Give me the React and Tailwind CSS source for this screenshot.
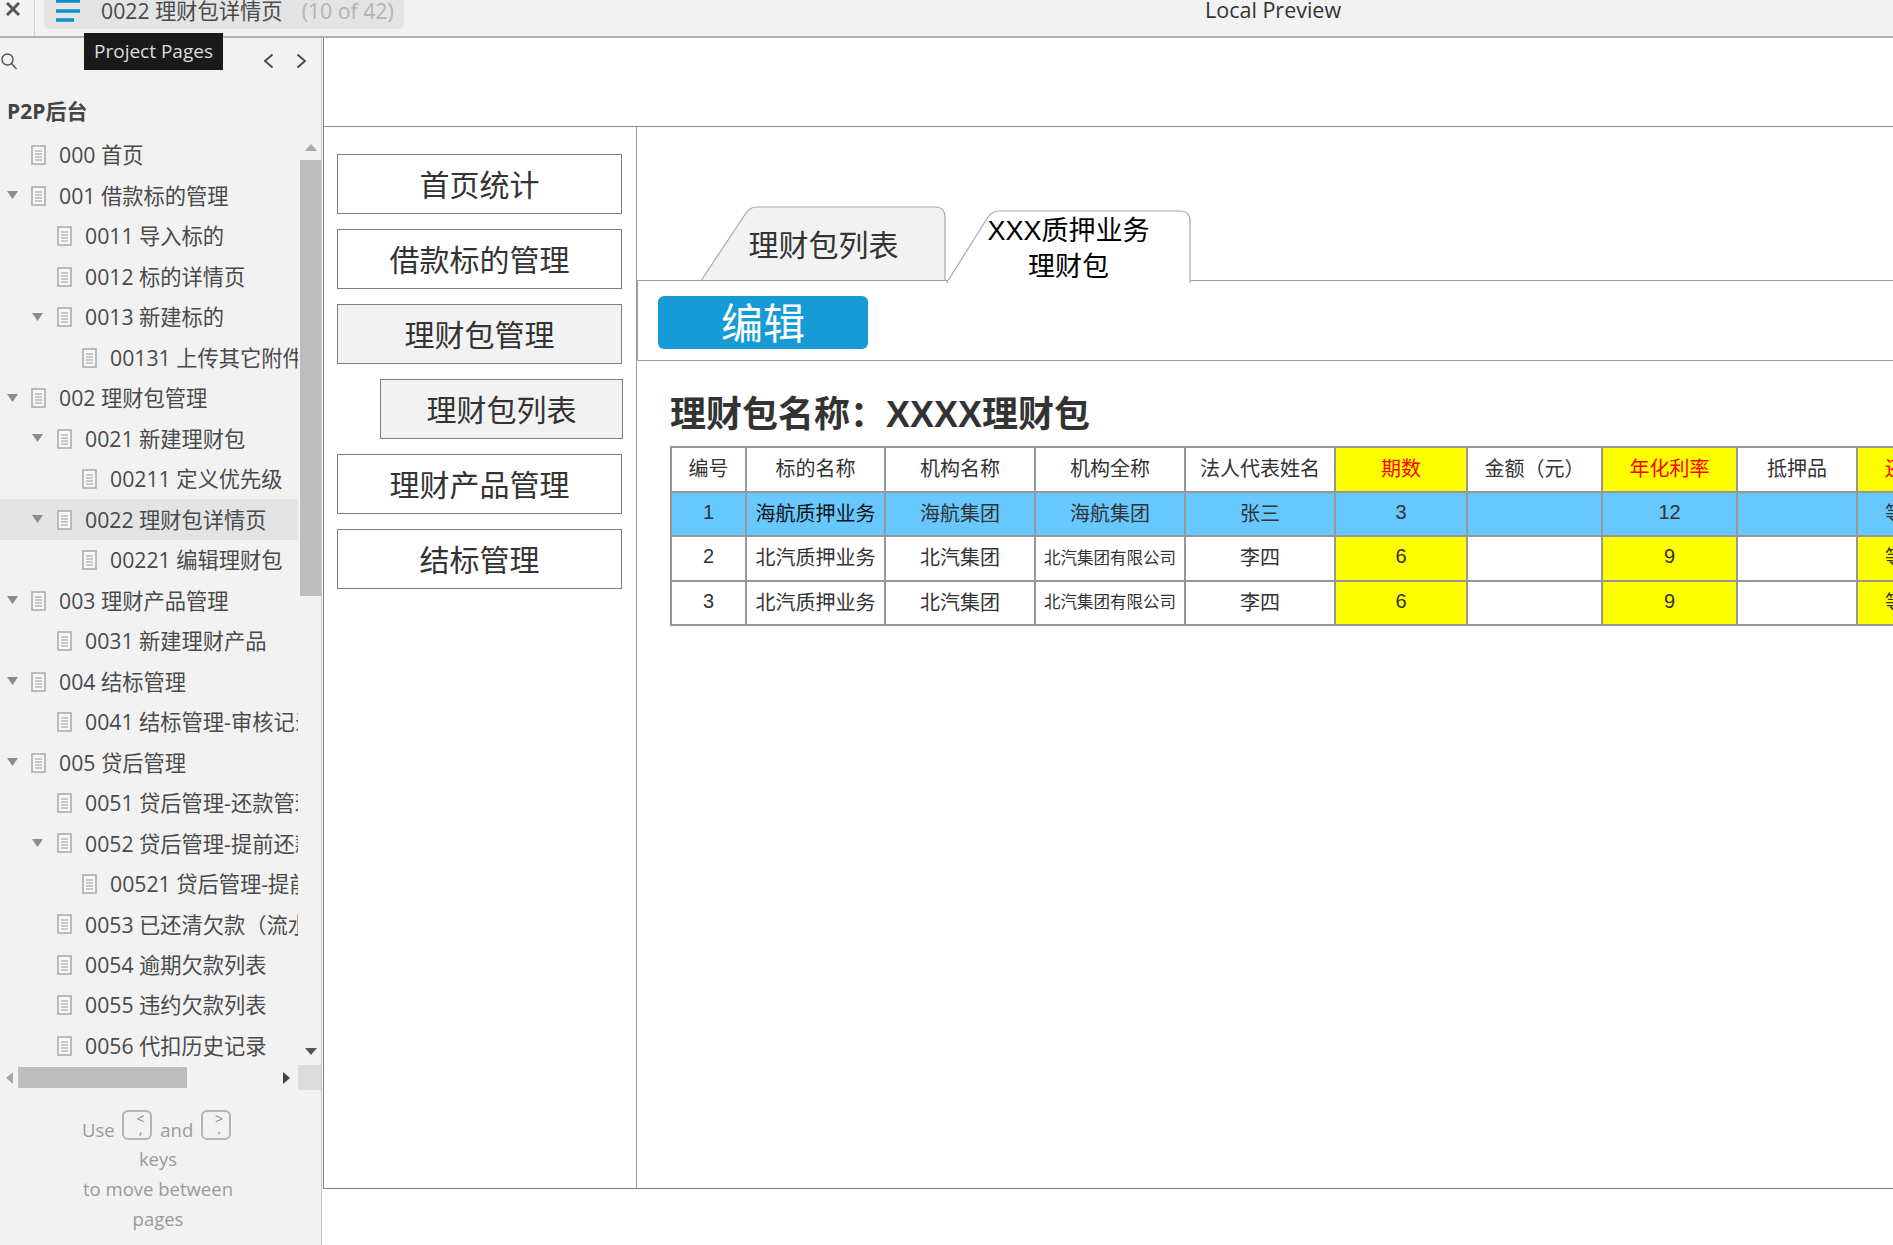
import React from 'react';

const pages = [
  { label: '000 首页', level: 0 },
  { label: '001 借款标的管理', level: 0, open: true },
  { label: '0011 导入标的', level: 1 },
  { label: '0012 标的详情页', level: 1 },
  { label: '0013 新建标的', level: 1, open: true },
  { label: '00131 上传其它附件', level: 2 },
  { label: '002 理财包管理', level: 0, open: true },
  { label: '0021 新建理财包', level: 1, open: true },
  { label: '00211 定义优先级', level: 2 },
  { label: '0022 理财包详情页', level: 1, open: true, active: true },
  { label: '00221 编辑理财包', level: 2 },
  { label: '003 理财产品管理', level: 0, open: true },
  { label: '0031 新建理财产品', level: 1 },
  { label: '004 结标管理', level: 0, open: true },
  { label: '0041 结标管理-审核记录', level: 1 },
  { label: '005 贷后管理', level: 0, open: true },
  { label: '0051 贷后管理-还款管理', level: 1 },
  { label: '0052 贷后管理-提前还款', level: 1, open: true },
  { label: '00521 贷后管理-提前还款记录', level: 2 },
  { label: '0053 已还清欠款\uFF08流水\uFF09', level: 1 },
  { label: '0054 逾期欠款列表', level: 1 },
  { label: '0055 违约欠款列表', level: 1 },
  { label: '0056 代扣历史记录', level: 1 },
];

const navItems = [
  { label: '首页统计' },
  { label: '借款标的管理' },
  { label: '理财包管理', grey: true },
  { label: '理财包列表', grey: true, sub: true },
  { label: '理财产品管理' },
  { label: '结标管理' },
];

const colWidths = [75, 139, 150, 150, 150, 132, 135, 135, 120, 136];

const headers = [
  { text: '编号' },
  { text: '标的名称' },
  { text: '机构名称' },
  { text: '机构全称' },
  { text: '法人代表姓名' },
  { text: '期数', hot: true },
  { text: '金额\uFF08元\uFF09' },
  { text: '年化利率', hot: true },
  { text: '抵押品' },
  { text: '还款方式', hot: true },
];

const rows = [
  ['1', '海航质押业务', '海航集团', '海航集团', '张三', '3', '', '12', '', '等额本息'],
  ['2', '北汽质押业务', '北汽集团', '北汽集团有限公司', '李四', '6', '', '9', '', '等额本息'],
  ['3', '北汽质押业务', '北汽集团', '北汽集团有限公司', '李四', '6', '', '9', '', '等额本息'],
];

const hotCols = [5, 7, 9];

const DocIcon = () => (
  <svg width="15" height="20" viewBox="0 0 15 20" className="shrink-0">
    <rect x="1" y="1" width="13" height="18" fill="#f7f7f7" stroke="#a8a8a8" strokeWidth="1.5" />
    <path d="M4 6h7M4 9h7M4 12h7M4 15h7" stroke="#9a9a9a" strokeWidth="1.2" />
  </svg>
);

const Caret = () => (
  <svg width="11" height="8" viewBox="0 0 11 8" className="shrink-0">
    <path d="M0 0h11L5.5 8z" fill="#8c8c8c" />
  </svg>
);

const Triangle = ({ d, w = 12, h = 7, fill = '#a8a8a8' }) => (
  <svg width={w} height={h} viewBox={`0 0 ${w} ${h}`}>
    <path d={d} fill={fill} />
  </svg>
);

const PageRow = ({ page }) => {
  const indent = ['pl-[31px]', 'pl-[57px]', 'pl-[82px]'][page.level];
  const caretPos = ['left-[7px]', 'left-[32px]', 'left-[57px]'][page.level];
  return (
    <div className={`relative flex h-[40.49px] items-center whitespace-nowrap ${indent} ${page.active ? 'bg-[#e4e4e4]' : ''}`}>
      {page.open && (
        <span className={`absolute top-[16px] ${caretPos} flex`}>
          <Caret />
        </span>
      )}
      <DocIcon />
      <span className="ml-[13px] text-[21.25px] text-[#4a4a4a]">{page.label}</span>
    </div>
  );
};

const Key = ({ top, bottom }) => (
  <span className="mx-[3px] inline-flex h-[30px] w-[30px] -translate-y-[7px] flex-col rounded-[6px] border-2 border-[#b4b4b4] pl-[6px] align-middle text-[14px] leading-[10px] text-[#8c8c8c]">
    <span className="mt-[2px]">{top}</span>
    <span>{bottom}</span>
  </span>
);

const Sidebar = () => (
  <aside className="relative flex h-full w-[322px] shrink-0 flex-col border-r border-[#c8c8c8] bg-[#f2f2f2]">
    {/* tooltip over the toolbar */}
    <div className="absolute left-[84px] top-[-5px] z-10 flex h-[37px] w-[139px] items-center justify-center bg-[#1a1a1a] text-[19px] text-[#dcdcdc]">
      Project Pages
    </div>

    <div className="flex h-[97px] shrink-0 flex-col">
      <div className="flex h-[46px] items-center pl-[1px] pr-[14px]">
        <svg width="16" height="17" viewBox="0 0 16 17" fill="none" stroke="#555" strokeWidth="1.4">
          <circle cx="6.5" cy="6.5" r="5.5" />
          <path d="M10.5 10.5l5 5.5" />
        </svg>
        <div className="ml-auto flex items-center gap-[22px]">
          <svg width="11" height="16" viewBox="0 0 11 16" fill="none" stroke="#444" strokeWidth="1.8">
            <path d="M9.5 1.5L2 8l7.5 6.5" />
          </svg>
          <svg width="11" height="16" viewBox="0 0 11 16" fill="none" stroke="#444" strokeWidth="1.8">
            <path d="M1.5 1.5L9 8l-7.5 6.5" />
          </svg>
        </div>
      </div>
      <div className="pl-[7px] pt-[9px] text-[21px] font-bold leading-[36px] text-[#444]">P2P后台</div>
    </div>

    <div className="flex h-[930px] shrink-0">
      <div className="w-[298px] shrink-0 overflow-hidden">
        {pages.map((page) => (
          <PageRow key={page.label} page={page} />
        ))}
      </div>
      <div className="flex w-[23px] flex-col pl-[2px]">
        <div className="flex h-[25px] items-end justify-center pb-[9px]">
          <Triangle d="M6 0l6 7H0z" />
        </div>
        <div className="h-[436px] bg-[#bdbdbd]" />
        <div className="mt-auto flex h-[25px] items-start justify-center pt-[8px]">
          <Triangle d="M0 0h12L6 7z" fill="#555" />
        </div>
      </div>
    </div>

    <div className="flex h-[25px] shrink-0 items-center">
      <span className="flex w-[18px] justify-center pl-[1px]">
        <Triangle w={7} h={12} d="M7 0v12L0 6z" />
      </span>
      <div className="h-[21px] w-[169px] bg-[#bdbdbd]" />
      <span className="ml-[96px] flex w-[7px]">
        <Triangle w={7} h={12} d="M0 0l7 6-7 6z" fill="#444" />
      </span>
      <div className="ml-[8px] h-[25px] flex-1 bg-[#dcdcdc]" />
    </div>

    <div className="w-[316px] pt-[25px] text-center text-[18.5px] leading-[30px] text-[#9a9a9a]">
      <div className="-mb-[3px]">
        Use <Key top="<" bottom="," /> and <Key top=">" bottom="." />
      </div>
      <div>keys</div>
      <div>to move between</div>
      <div>pages</div>
    </div>
  </aside>
);

const Tabs = () => (
  <div className="flex h-[153px] shrink-0 items-end pl-[64px]">
    <div className="relative flex h-[74px] w-[245px] items-center justify-center pt-[4px] text-[30px] text-[#333]">
      <svg width="245" height="74" viewBox="0 0 245 74" className="absolute inset-0">
        <path d="M.5 74L45 7Q49 1 56 1H234Q244 1 244 11V74" fill="#f2f2f2" stroke="#a8a8a8" strokeWidth="1.2" />
      </svg>
      <span className="relative">理财包列表</span>
    </div>
    <div className="relative z-10 -mb-[3px] flex h-[73px] w-[245px] items-center justify-center pt-[4px] text-center text-[27px] leading-[36px] text-black">
      <svg width="245" height="73" viewBox="0 0 245 73" className="absolute inset-0">
        <path d="M.5 73L42 7Q46 1 54 1H234Q244 1 244 11V73" fill="#fff" stroke="#a8a8a8" strokeWidth="1.2" />
        <path d="M2 72H243" stroke="#fff" strokeWidth="3" />
      </svg>
      <span className="relative whitespace-nowrap">
        XXX质押业务
        <br />
        理财包
      </span>
    </div>
  </div>
);

const DataTable = () => (
  <table className="w-[1222px] table-fixed border-collapse text-[20px] text-[#333]">
    <colgroup>
      {colWidths.map((w, i) => (
        <col key={i} style={{ width: w }} />
      ))}
    </colgroup>
    <thead>
      <tr className="h-[44.5px]">
        {headers.map((h) => (
          <th
            key={h.text}
            className={`overflow-hidden whitespace-nowrap border-2 border-[#979797] p-0 text-center font-normal ${h.hot ? 'bg-[#ffff00] text-[#ff0000]' : 'bg-white'}`}
          >
            {h.text}
          </th>
        ))}
      </tr>
    </thead>
    <tbody>
      {rows.map((row, r) => (
        <tr key={r} className="h-[44.5px]">
          {row.map((cell, c) => {
            const bg = r === 0 ? 'bg-[#66c8ff]' : hotCols.includes(c) ? 'bg-[#ffff00]' : 'bg-white';
            const small = cell === '北汽集团有限公司' ? 'text-[16.5px]' : '';
            const strong = r === 0 && c === 1 ? 'text-[#111]' : '';
            const raised = /^\d+$/.test(cell) ? 'pb-[4px]' : 'p-0';
            return (
              <td
                key={c}
                className={`overflow-hidden whitespace-nowrap border-2 border-[#979797] text-center ${raised} ${bg} ${small} ${strong}`}
              >
                {cell}
              </td>
            );
          })}
        </tr>
      ))}
    </tbody>
  </table>
);

export default function App() {
  return (
    <div className="flex h-[1245px] w-[1893px] flex-col overflow-hidden bg-white font-['Open_Sans','Noto_Sans_CJK_SC',sans-serif]">
      {/* Toolbar */}
      <header className="relative flex h-[38px] shrink-0 items-start border-b-2 border-[#b0b0b0] bg-[#f2f2f2]">
        <div className="flex h-[36px] w-[35px] border-r border-[#d0d0d0] pl-[6px] pt-[2px]">
          <svg width="14" height="14" viewBox="0 0 14 14" stroke="#555" strokeWidth="3">
            <path d="M1 1l12 12M13 1L1 13" />
          </svg>
        </div>
        <div className="ml-[9px] flex h-[29px] w-[360px] items-center rounded-b-[5px] bg-[#e4e4e4] pb-[7px] pl-[12px]">
          <svg width="24" height="22" viewBox="0 0 24 22">
            <path d="M0 1h24M0 11h24M0 20h18" stroke="#0b8fd0" strokeWidth="3.4" />
          </svg>
          <span className="ml-[21px] whitespace-nowrap text-[21.25px] leading-[24px] text-[#4a4a4a]">0022 理财包详情页</span>
          <span className="ml-[19px] whitespace-nowrap text-[21.25px] leading-[24px] text-[#b4b4b4]">(10 of 42)</span>
        </div>
        <div className="ml-[801px] whitespace-nowrap text-[21.5px] leading-[20px] text-[#333]">Local Preview</div>
      </header>

      <div className="flex min-h-0 flex-1">
        <Sidebar />

        {/* Preview frame */}
        <div className="flex-1 overflow-hidden pl-[1px]">
          <div className="flex h-[1151px] flex-col border-b border-l border-[#808080] font-['Liberation_Sans','Noto_Sans_CJK_SC',sans-serif]">
            <div className="h-[89px] shrink-0 border-b border-[#8a8a8a]" />
            <div className="flex min-h-0 flex-1">
              {/* Left menu */}
              <nav className="flex w-[313px] shrink-0 flex-col gap-[15px] border-r border-[#9a9a9a] pt-[27px]">
                {navItems.map((item) => (
                  <div
                    key={item.label}
                    className={`flex h-[60px] items-center justify-center border border-[#808080] pt-[3px] text-[30px] text-[#333] ${item.sub ? 'ml-[56px] w-[243px]' : 'ml-[13px] w-[285px]'} ${item.grey ? 'bg-[#f2f2f2]' : 'bg-white'}`}
                  >
                    {item.label}
                  </div>
                ))}
              </nav>

              {/* Detail */}
              <main className="min-w-0 flex-1 overflow-hidden">
                <Tabs />
                <div className="flex h-[81px] items-center border-y border-l border-[#a0a0a0] pl-[20px] pt-[3px]">
                  <div className="flex h-[53px] w-[210px] items-center justify-center rounded-[6px] bg-[#179bd7] pt-[5px] text-[42px] text-white">
                    编辑
                  </div>
                </div>
                <h1 className="ml-[33px] mt-[29px] whitespace-nowrap text-[36px] font-bold leading-[50px] text-[#333]">
                  理财包名称{'\uFF1A'}XXXX理财包
                </h1>
                <div className="ml-[33px] mt-[6px]">
                  <DataTable />
                </div>
              </main>
            </div>
          </div>
        </div>
      </div>
    </div>
  );
}
